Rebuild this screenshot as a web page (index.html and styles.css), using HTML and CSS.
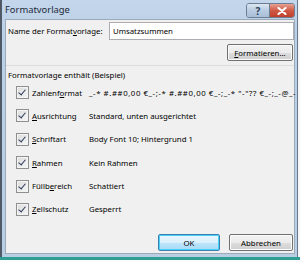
FILE: index.html
```html
<!DOCTYPE html>
<html>
<head>
<meta charset="utf-8">
<link rel="stylesheet" href="styles.css">
</head>
<body>
<div class="window">
  <div class="titlebar">
    <span class="title">Formatvorlage</span>
    <div class="caption-btns">
      <div class="cbtn help">?</div>
      <div class="cbtn close"><svg width="10" height="8" viewBox="0 0 10 8"><path d="M1.5 1 L8.5 7 M8.5 1 L1.5 7" stroke="#fff" stroke-width="2.2" stroke-linecap="round"/></svg></div>
    </div>
  </div>
  <div class="client">
    <div class="name-row">
      <span class="lbl">Name der Format<u>v</u>orlage:</span>
      <div class="input">Umsatzsummen</div>
    </div>
    <div class="fmt-row"><div class="btn fmt"><u>F</u>ormatieren...</div></div>
    <div class="sep"></div>
    <div class="group-title">Formatvorlage enthält (Beispiel)</div>
    <div class="rows">
      <div class="row"><span class="cb"></span><span class="name">Zahlenf<u>o</u>rmat</span><span class="val code">_-* #.##0,00 €_-;-* #.##0,00 €_-;_-* "-"?? €_-;_-@_-</span></div>
      <div class="row"><span class="cb"></span><span class="name"><u>A</u>usrichtung</span><span class="val">Standard, unten ausgerichtet</span></div>
      <div class="row"><span class="cb"></span><span class="name"><u>S</u>chriftart</span><span class="val">Body Font 10; Hintergrund 1</span></div>
      <div class="row"><span class="cb"></span><span class="name"><u>R</u>ahmen</span><span class="val">Kein Rahmen</span></div>
      <div class="row"><span class="cb"></span><span class="name">Füllb<u>e</u>reich</span><span class="val">Schattiert</span></div>
      <div class="row"><span class="cb"></span><span class="name"><u>Z</u>ellschutz</span><span class="val">Gesperrt</span></div>
    </div>
    <div class="actions">
      <div class="btn ok">OK</div>
      <div class="btn cancel">Abbrechen</div>
    </div>
  </div>
</div>
<div class="desk"></div>
</body>
</html>
```
FILE: styles.css
```css
html, body {
  margin: 0;
  padding: 0;
  background: #f4f6f8;
}
body {
  width: 300px;
  height: 260px;
  overflow: hidden;
  font-family: "Noto Sans", "DejaVu Sans", sans-serif;
  font-size: 7.8px;
  color: #000;
}
.window {
  width: 295px;
  height: 257px;
  background: linear-gradient(#c3d6ec, #bcd0e6 30px, #b9cde3);
  border-left: 2px solid #4f5a66;
  border-right: 1px solid #6a7a8a;
  display: flex;
  flex-direction: column;
}
.titlebar {
  height: 19px;
  display: flex;
  align-items: center;
  justify-content: space-between;
  padding-left: 3px;
}
.title {
  font-size: 9.4px;
  color: #1e2a38;
  padding-bottom: 1px;
}
.caption-btns {
  display: flex;
  align-self: flex-start;
  margin-top: 3px;
  margin-right: 2px;
  border: 1px solid #6c7e92;
  border-radius: 3px;
  overflow: hidden;
  height: 13px;
}
.cbtn {
  display: flex;
  align-items: center;
  justify-content: center;
  height: 13px;
}
.help {
  width: 22px;
  background: linear-gradient(#dbe6f2, #b8cce2 50%, #a9bfd8);
  color: #2c3e55;
  font-weight: bold;
  font-size: 10px;
  border-right: 1px solid #6c7e92;
}
.close {
  width: 24px;
  background: linear-gradient(#e8a192, #cf5a45 50%, #c13f2a);
}
.client {
  flex: 1;
  margin: 0 2px 3px 3px;
  background: #f0f0f0;
  border: 1px solid #9aaabb;
  position: relative;
}
.name-row {
  display: flex;
  align-items: center;
  margin-top: 2px;
  padding-left: 2px;
}
.lbl {
  width: 101px;
  white-space: nowrap;
}
.input {
  width: 180px;
  height: 16px;
  border: 1px solid #abadb3;
  background: #fff;
  display: flex;
  align-items: center;
  padding-left: 3px;
}
.fmt-row {
  display: flex;
  justify-content: flex-end;
  margin-top: 4px;
  padding-right: 1px;
}
.btn {
  height: 15px;
  border: 1px solid #707070;
  border-radius: 2px;
  background: linear-gradient(#f2f2f2, #ebebeb 50%, #dddddd 51%, #cfcfcf);
  display: flex;
  align-items: center;
  justify-content: center;
  box-shadow: inset 0 0 0 1px #fcfcfc;
}
.fmt {
  width: 64px;
}
.sep {
  height: 1px;
  background: #dcdcdc;
  margin-top: 4px;
}
.group-title {
  margin-top: 3px;
  padding-left: 2px;
  height: 13px;
  line-height: 13px;
}
.rows {
  margin-top: 4px;
  display: flex;
  flex-direction: column;
  gap: 10.4px;
}
.row {
  display: flex;
  align-items: center;
  height: 13px;
  padding-left: 10px;
}
.cb {
  width: 11px;
  height: 11px;
  border: 1px solid #8e8f8f;
  background: linear-gradient(135deg, #dcdcdc, #f6f6f6);
  box-shadow: inset 0 0 0 1px #f4f4f4;
  position: relative;
  margin-right: 3px;
  flex: none;
}
.cb::after {
  content: "";
  position: absolute;
  left: 3px;
  top: 1px;
  width: 3px;
  height: 6px;
  border-right: 1.6px solid #2b3a5a;
  border-bottom: 1.6px solid #2b3a5a;
  transform: rotate(40deg);
}
.name {
  width: 57px;
  flex: none;
}
.val {
  white-space: nowrap;
}
.code {
  letter-spacing: 0.58px;
}
.actions {
  position: absolute;
  right: 1px;
  bottom: 2px;
  display: flex;
  gap: 9px;
}
.ok {
  width: 60px;
  border-color: #3c7fb1;
  box-shadow: inset 0 0 0 1px #48d1f8;
  background: linear-gradient(#eaf6fd, #d9f0fc 50%, #bee6fd 51%, #a7d9f5);
}
.cancel {
  width: 62px;
}
.desk {
  height: 3px;
  background: #2e9e94;
}
```
